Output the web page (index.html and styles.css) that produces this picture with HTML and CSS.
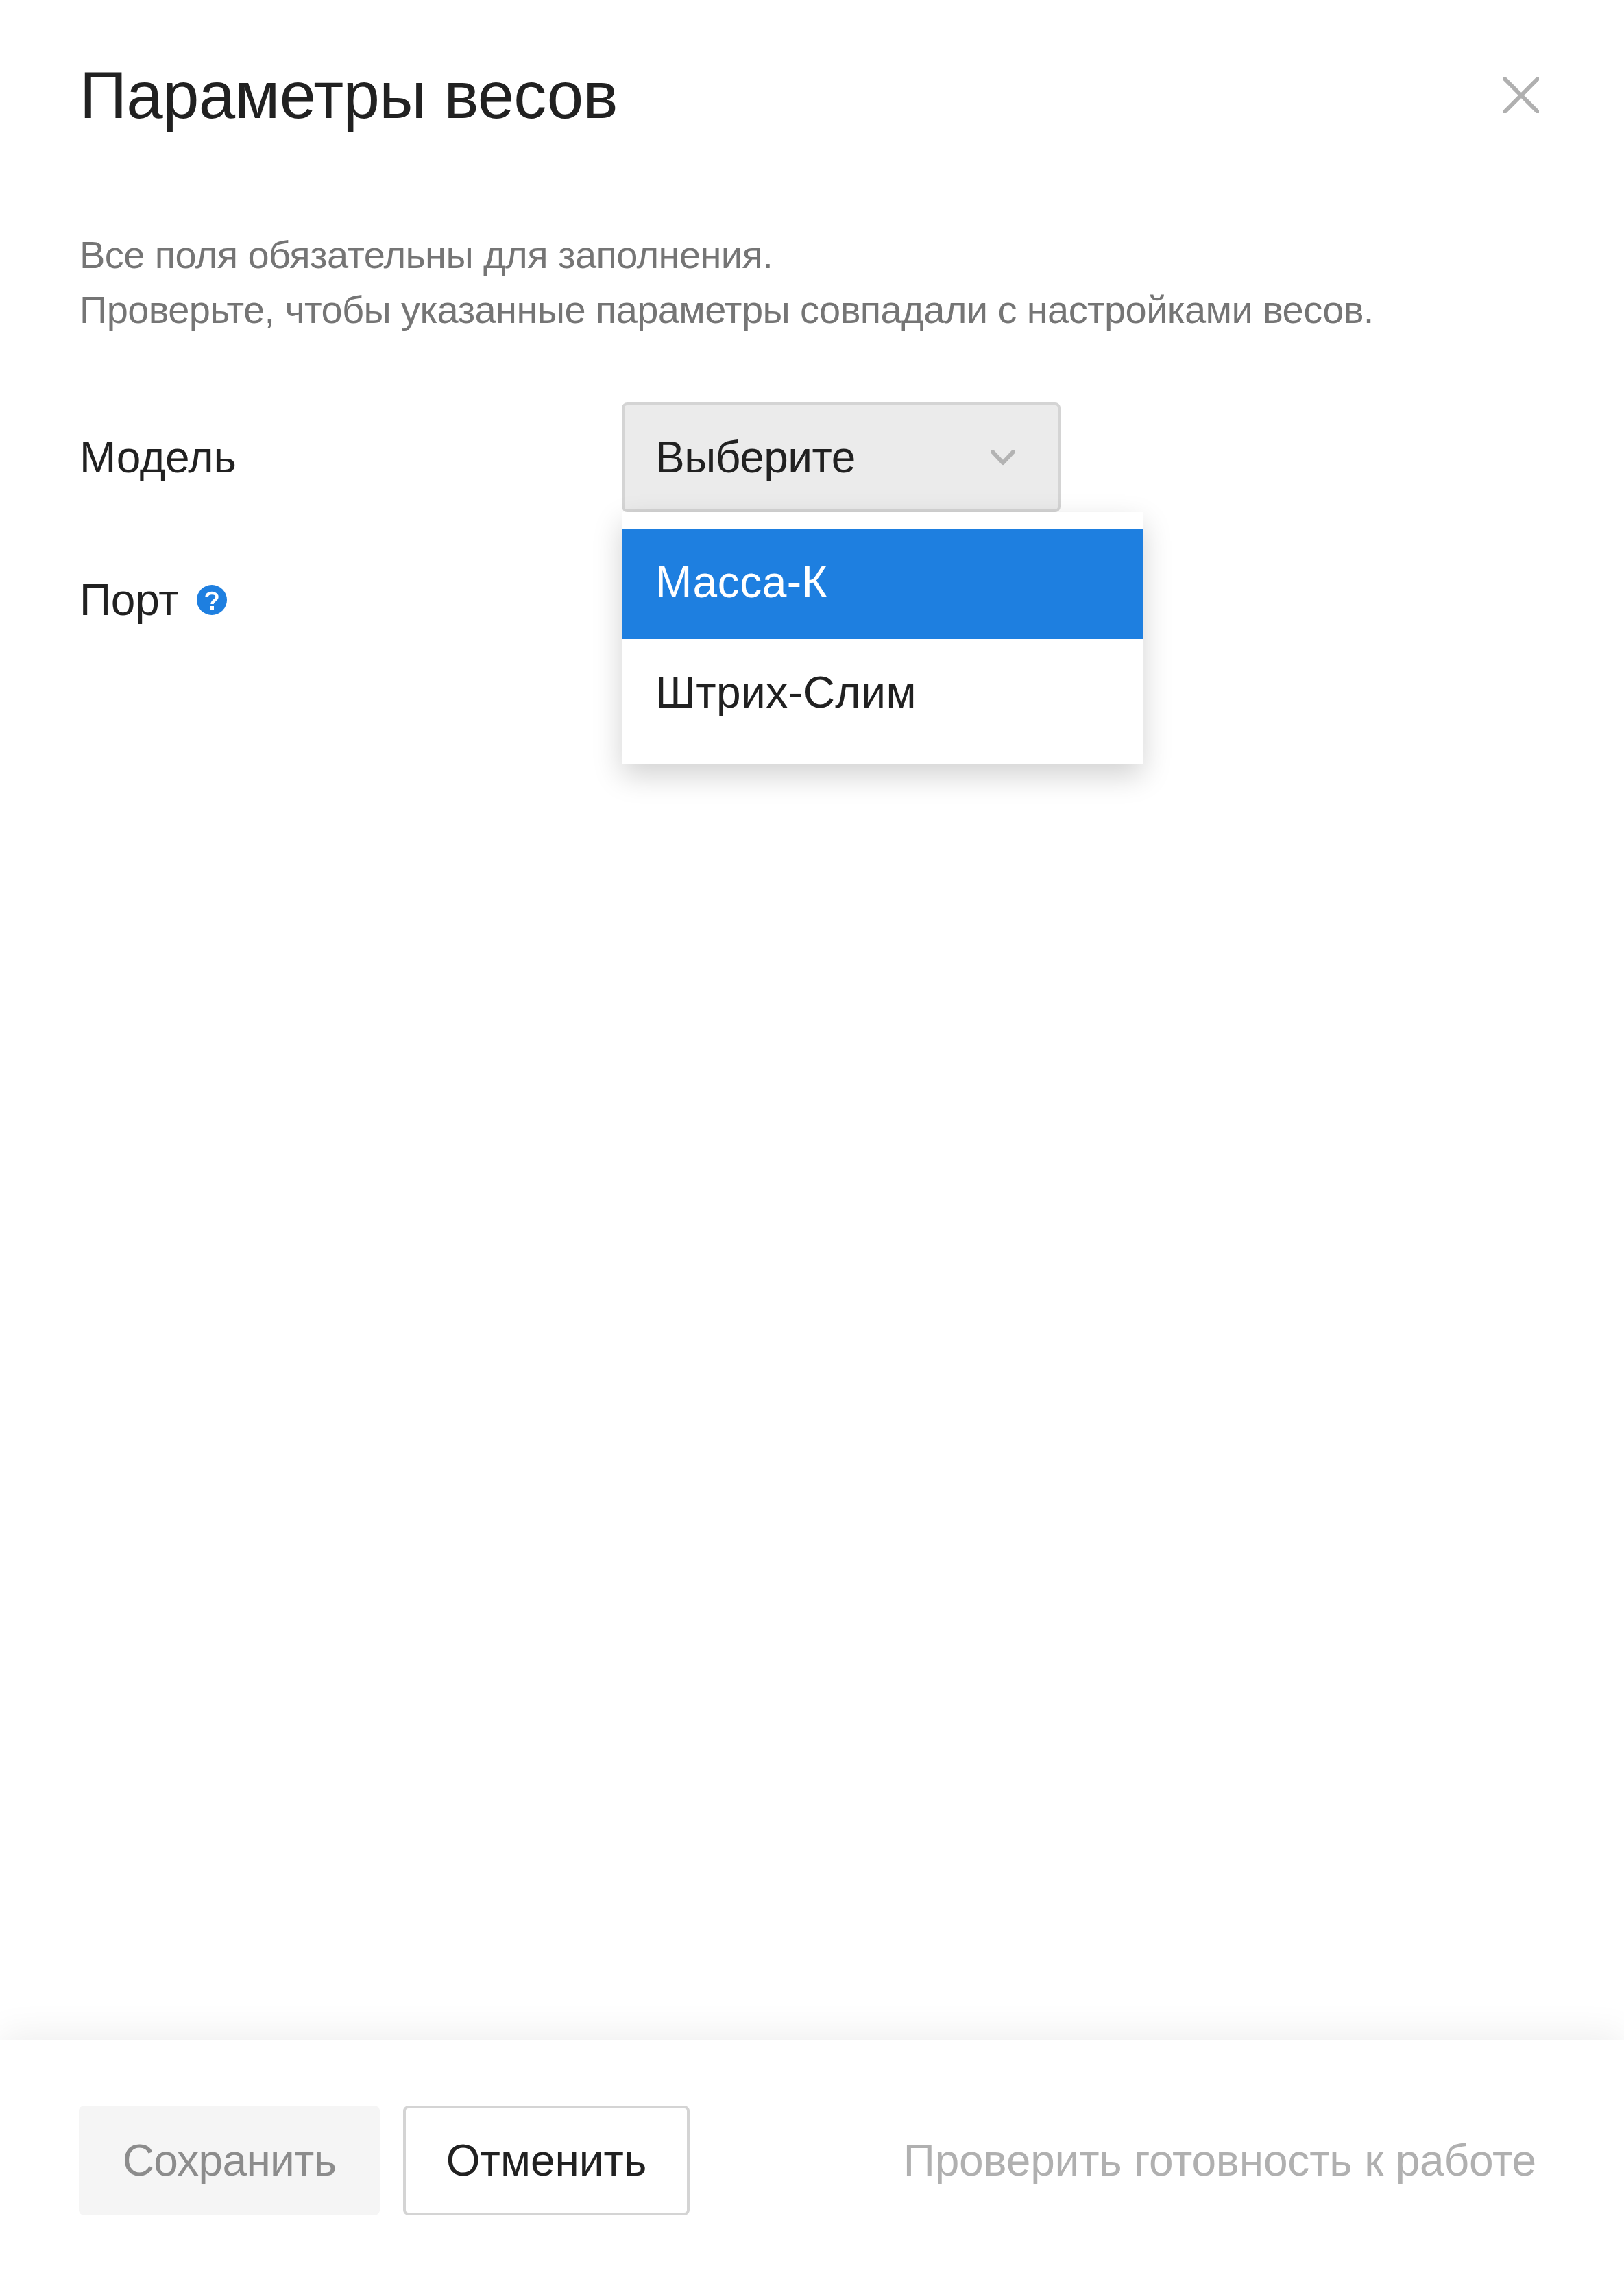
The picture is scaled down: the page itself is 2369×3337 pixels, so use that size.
FILE: index.html
```html
<!DOCTYPE html>
<html lang="ru">
<head>
  <meta charset="UTF-8">
  <title>Параметры весов</title>
  <link rel="stylesheet" href="styles.css">
</head>
<body>
  <div class="dialog">
    <div class="dialog-body">
      <div class="header">
        <h1 class="title">Параметры весов</h1>
        <svg class="close" width="52" height="52" viewBox="0 0 52 52">
          <path d="M2 2L50 50M50 2L2 50" fill="none" stroke="#b0b0b0" stroke-width="6" stroke-linecap="round"/>
        </svg>
      </div>

      <p class="hint">Все поля обязательны для заполнения.<br>Проверьте, чтобы указанные параметры совпадали с настройками весов.</p>

      <div class="row row-model">
        <div class="label">Модель</div>
        <div class="select-wrap">
          <div class="select">
            <span class="select-value">Выберите</span>
            <svg width="36" height="23" viewBox="0 0 36 23">
              <path d="M3 3L18 19L33 3" fill="none" stroke="#b3b3b3" stroke-width="6" stroke-linecap="round" stroke-linejoin="round"/>
            </svg>
          </div>
          <!-- Открытый список -->
          <ul class="menu">
            <li class="menu-item active">Масса-К</li>
            <li class="menu-item">Штрих-Слим</li>
          </ul>
        </div>
      </div>

      <div class="row row-port">
        <div class="label">Порт</div>
        <svg class="help" width="44" height="44" viewBox="0 0 44 44">
          <circle cx="22" cy="22" r="22" fill="#1e7fe0"/>
          <path d="M14.5 18C14.5 14 17.5 12 22 12C26.5 12 29.5 14.5 29.5 17.5C29.5 22.5 22.5 22.5 22.5 28" fill="none" stroke="#fff" stroke-width="4.4"/>
          <rect x="20" y="31" width="5" height="5" fill="#fff"/>
        </svg>
      </div>
    </div>

    <div class="footer">
      <button class="btn btn-save" type="button">Сохранить</button>
      <button class="btn btn-cancel" type="button">Отменить</button>
      <span class="check-link">Проверить готовность к работе</span>
    </div>
  </div>
</body>
</html>
```

FILE: styles.css
```css
* {
  box-sizing: border-box;
}
body {
  margin: 0;
  background: #fff;
  font-family: "Liberation Sans", Arial, sans-serif;
  color: #212121;
}
.dialog {
  height: 100vh;
  display: flex;
  flex-direction: column;
}
.dialog-body {
  flex: 1;
  padding: 0 124px 0 116px;
}
.header {
  display: flex;
  justify-content: space-between;
  align-items: center;
  height: 278px;
}
.title {
  margin: 0;
  font-size: 96px;
  font-weight: 400;
  letter-spacing: -0.7px;
}
.hint {
  margin: 54px 0 0;
  font-size: 56px;
  line-height: 80px;
  letter-spacing: -0.6px;
  color: #757575;
}
.row {
  display: flex;
  align-items: center;
  font-size: 64px;
}
.row-model {
  margin-top: 95px;
}
.row-port {
  margin-top: 48px;
  height: 160px;
}
.label {
  width: 791px;
  letter-spacing: -0.2px;
}
.row-port .label {
  width: auto;
}
.help {
  margin-left: 27px;
}
.select-wrap {
  position: relative;
}
.select {
  width: 640px;
  height: 160px;
  padding: 0 62px 0 45px;
  display: flex;
  justify-content: space-between;
  align-items: center;
  background: #ebebeb;
  border: 4px solid #d4d4d4;
  border-radius: 8px;
}
.select-value {
  letter-spacing: -0.5px;
}
.menu {
  position: absolute;
  top: 160px;
  left: 0;
  width: 760px;
  height: 368px;
  margin: 0;
  padding: 24px 0 0;
  list-style: none;
  background: #fff;
  box-shadow: 0 16px 40px rgba(0,0,0,0.18);
}
.menu-item {
  height: 161px;
  padding: 0 49px 6px;
  display: flex;
  align-items: center;
  letter-spacing: 0.5px;
}
.menu-item.active {
  background: #1e7fe0;
  color: #fff;
}
.footer {
  height: 362px;
  padding: 96px 128px 0 115px;
  display: flex;
  align-items: flex-start;
  background: #fff;
  box-shadow: 0 -8px 50px rgba(0,0,0,0.07);
  position: relative;
}
.btn {
  height: 160px;
  font-family: inherit;
  font-size: 64px;
  border-radius: 8px;
}
.btn-save {
  width: 439px;
  background: #f5f5f5;
  border: none;
  letter-spacing: -0.7px;
  color: #8c8c8c;
}
.btn-cancel {
  width: 418px;
  margin-left: 34px;
  background: #fff;
  border: 4px solid #d4d4d4;
  color: #212121;
}
.check-link {
  margin-left: auto;
  line-height: 160px;
  font-size: 64px;
  letter-spacing: -0.15px;
  color: #b0b0b0;
}
```
